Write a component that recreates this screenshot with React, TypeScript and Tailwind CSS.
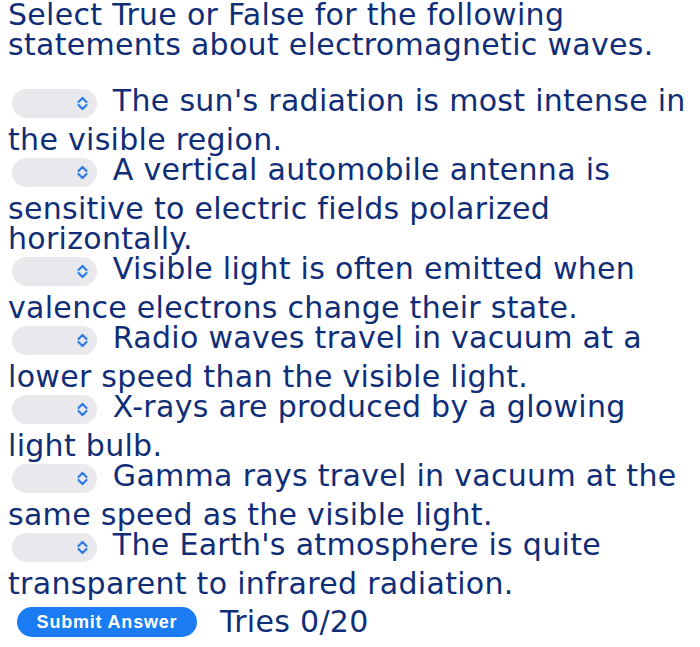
import React from "react";

const items = [
  "The sun's radiation is most intense in the visible region.",
  "A vertical automobile antenna is sensitive to electric fields polarized horizontally.",
  "Visible light is often emitted when valence electrons change their state.",
  "Radio waves travel in vacuum at a lower speed than the visible light.",
  "X-rays are produced by a glowing light bulb.",
  "Gamma rays travel in vacuum at the same speed as the visible light.",
  "The Earth's atmosphere is quite transparent to infrared radiation.",
];

function Chevron() {
  return (
    <svg width="13" height="15" viewBox="0 0 13 15" fill="none" stroke="#2a7be4" strokeWidth="2.2" strokeLinecap="round" strokeLinejoin="round">
      <path d="M2.5 6 L6.5 2 L10.5 6" />
      <path d="M2.5 9 L6.5 13 L10.5 9" />
    </svg>
  );
}

function SelectBox() {
  return (
    <span className="inline-block overflow-hidden w-[85px] h-[29px] rounded-full bg-[#e9e9ed] align-[-14px] mb-[7px] ml-[4px] mr-[6px]">
      <span className="flex h-full items-center justify-end pr-[8px]">
        <Chevron />
      </span>
    </span>
  );
}

export default function App() {
  return (
    <div
      className="pl-[8px] pr-[13px] pt-0 text-[#0f2e77] text-[30px] leading-[30px] tracking-[0.3px] [font-variant-ligatures:none]"
      style={{ fontFamily: '"DejaVu Sans", Verdana, sans-serif' }}
    >
      <div>Select True or False for the following statements about electromagnetic waves.</div>
      <div className="mt-[26px]">
        {items.map((t, i) => (
          <div key={i}>
            <SelectBox /> {t}
          </div>
        ))}
      </div>
      <div className="flex items-center gap-[23px] mt-[8px] pl-[9px]">
        <button
          className="w-[180px] h-[30px] rounded-full bg-[#1a7bf2] text-white text-[18px] font-bold leading-none tracking-[0.8px]"
          style={{ fontFamily: '"Liberation Sans", Arial, sans-serif' }}
        >
          Submit Answer
        </button>
        <span>Tries 0/20</span>
      </div>
    </div>
  );
}
